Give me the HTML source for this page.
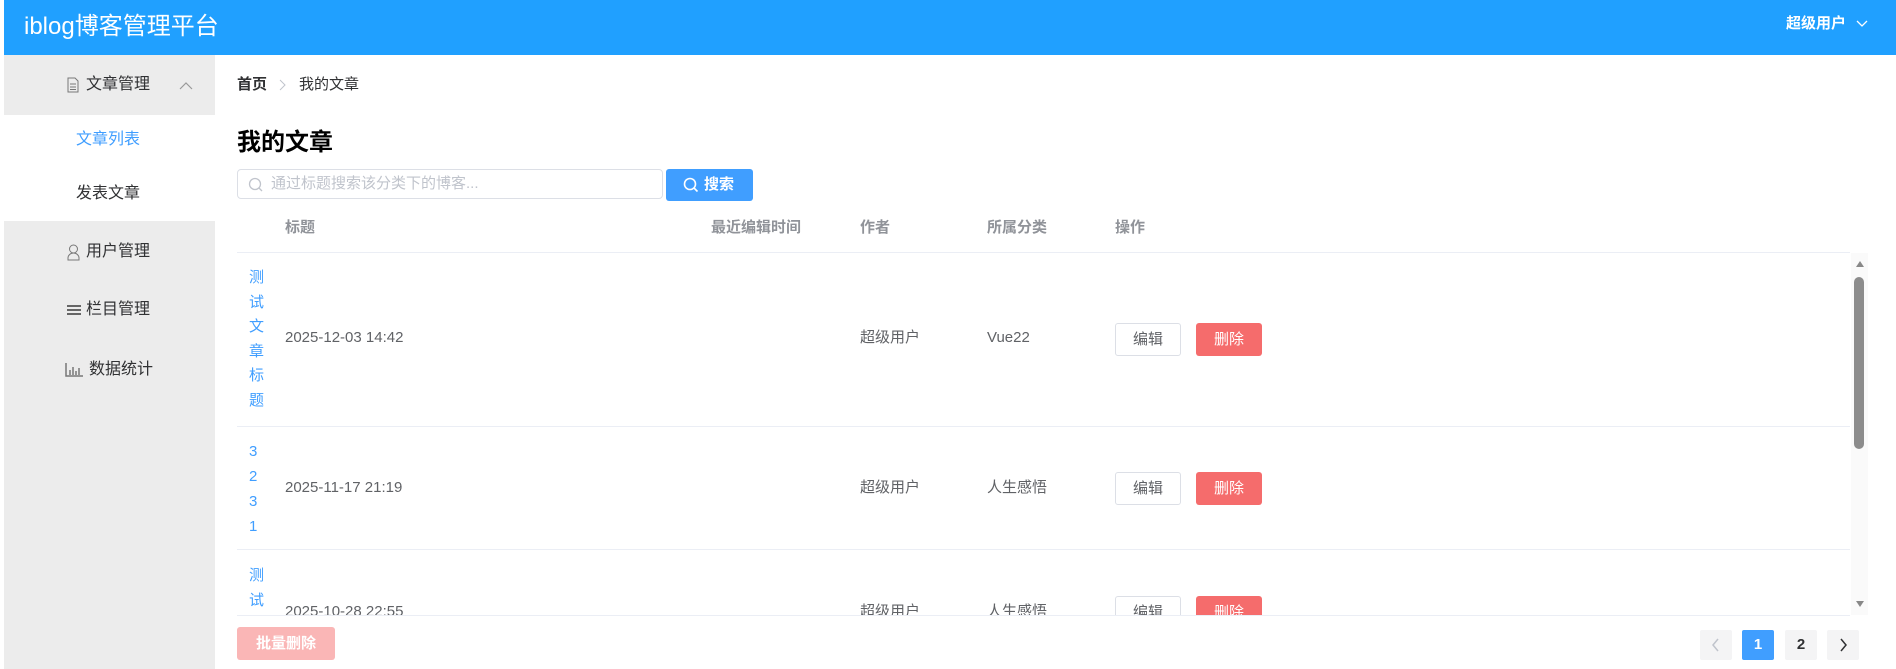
<!DOCTYPE html>
<html><head><meta charset="utf-8"><style>
*{margin:0;padding:0;box-sizing:border-box}
html,body{width:1896px;height:669px;overflow:hidden}
body{background:#fff;font-family:"Liberation Sans","Noto Sans CJK SC",sans-serif;position:relative}
.a{position:absolute;white-space:nowrap}
.hdr{left:4px;top:0;width:1892px;height:55px;background:#20a0ff}
.side{left:4px;top:55px;width:211px;height:614px;background:#ececec}
.mi{font-size:16px;color:#303133;line-height:20px}
.th{font-size:15px;color:#909399;font-weight:bold;top:217px;line-height:20px}
.td{font-size:15px;color:#606266;line-height:20px}
.vc{font-size:15px;color:#409eff;left:249px;line-height:20px;white-space:normal;word-break:break-all;width:12px}
.btn{width:66px;height:33px;border-radius:3px;font-size:15px;text-align:center;line-height:31px}
.ed{border:1px solid #dcdfe6;color:#606266;background:#fff;left:1115px}
.del{background:#f56c6c;color:#fff;left:1196px;line-height:33px}
.line{height:1px;background:#ebeef5;left:237px;width:1613px}
.pg{width:32px;height:30px;background:#f4f4f5;border-radius:2px;font-size:15px;font-weight:bold;text-align:center;line-height:30px;color:#303133;top:630px}
</style></head><body>
<div class="a hdr"></div>
<div class="a" style="left:24px;top:12px;font-size:24px;color:#fff;line-height:30px">iblog博客管理平台</div>
<div class="a" style="left:1786px;top:14px;font-size:15px;color:#fff;line-height:20px;font-weight:bold">超级用户</div>
<svg class="a" style="left:1856px;top:19px" width="12" height="10" viewBox="0 0 12 10"><path d="M1 2l5 5 5-5" stroke="#fff" stroke-width="1.3" fill="none"/></svg>

<div class="a side"></div>
<div class="a" style="left:4px;top:115px;width:211px;height:106px;background:#fff"></div>
<svg class="a" style="left:67px;top:77px" width="12" height="16" viewBox="0 0 12 16"><path d="M1 1h7l3 3v11H1z M3 7h6M3 10h6M3 12.5h6" stroke="#777" fill="none"/></svg>
<div class="a mi" style="left:86px;top:75px">文章管理</div>
<svg class="a" style="left:179px;top:81px" width="14" height="9" viewBox="0 0 14 9"><path d="M1 8l6-6 6 6" stroke="#999" stroke-width="1.2" fill="none"/></svg>
<div class="a mi" style="left:76px;top:130px;color:#409eff">文章列表</div>
<div class="a mi" style="left:76px;top:184px">发表文章</div>
<svg class="a" style="left:67px;top:244px" width="13" height="17" viewBox="0 0 13 17"><circle cx="6.5" cy="5" r="4" stroke="#777" fill="none"/><path d="M1 16v-2a5.5 5 0 0 1 11 0v2z" stroke="#777" fill="none"/></svg>
<div class="a mi" style="left:86px;top:242px">用户管理</div>
<svg class="a" style="left:67px;top:304px" width="14" height="12" viewBox="0 0 14 12"><path d="M0 2h14M0 6h14M0 10h14" stroke="#666" stroke-width="2"/></svg>
<div class="a mi" style="left:86px;top:300px">栏目管理</div>
<svg class="a" style="left:65px;top:363px" width="18" height="14" viewBox="0 0 18 14"><path d="M1 0v13h17M5 12V7M8 12V4M11 12V8M14 12V5" stroke="#777" stroke-width="1.5" fill="none"/></svg>
<div class="a mi" style="left:89px;top:360px">数据统计</div>

<div class="a" style="left:237px;top:75px;font-size:15px;font-weight:bold;color:#303133;line-height:20px">首页</div>
<svg class="a" style="left:279px;top:79px" width="8" height="12" viewBox="0 0 8 12"><path d="M1 1l5 5-5 5" stroke="#c0c4cc" fill="none"/></svg>
<div class="a" style="left:299px;top:75px;font-size:15px;color:#303133;line-height:20px">我的文章</div>
<div class="a" style="left:237px;top:128px;font-size:24px;font-weight:bold;color:#000;line-height:30px">我的文章</div>
<div class="a" style="left:237px;top:169px;width:426px;height:30px;border:1px solid #dcdfe6;border-radius:4px"></div>
<svg class="a" style="left:248px;top:177px" width="15" height="15" viewBox="0 0 15 15"><circle cx="7" cy="7" r="5.5" stroke="#c0c4cc" stroke-width="1.3" fill="none"/><path d="M11 11l3 3" stroke="#c0c4cc" stroke-width="1.3"/></svg>
<div class="a" style="left:271px;top:174px;font-size:15px;color:#c0c4cc;line-height:20px">通过标题搜索该分类下的博客...</div>
<div class="a" style="left:666px;top:169px;width:87px;height:32px;background:#409eff;border-radius:3px"></div>
<svg class="a" style="left:683px;top:177px" width="16" height="16" viewBox="0 0 16 16"><circle cx="7" cy="7" r="5.5" stroke="#fff" stroke-width="1.6" fill="none"/><path d="M11 11l3.5 3.5" stroke="#fff" stroke-width="1.6"/></svg>
<div class="a" style="left:704px;top:175px;font-size:15px;font-weight:bold;color:#fff;line-height:20px">搜索</div>

<div class="a th" style="left:285px;top:218px">标题</div>
<div class="a th" style="left:711px;top:218px">最近编辑时间</div>
<div class="a th" style="left:860px;top:218px">作者</div>
<div class="a th" style="left:987px;top:218px">所属分类</div>
<div class="a th" style="left:1115px;top:218px">操作</div>
<div class="a line" style="top:252px"></div>

<div class="a" style="left:0;top:253px;width:1896px;height:362px;overflow:hidden">
<div class="a vc" style="top:13px;line-height:24.6px;width:16px">测试文章标题</div>
<div class="a td" style="left:285px;top:75px">2025-12-03 14:42</div>
<div class="a td" style="left:860px;top:75px">超级用户</div>
<div class="a td" style="left:987px;top:75px">Vue22</div>
<div class="a btn ed" style="top:70px">编辑</div>
<div class="a btn del" style="top:70px">删除</div>
<div class="a line" style="top:173px;width:1613px"></div>
<div class="a vc" style="top:186px;line-height:25px;width:10px">3231</div>
<div class="a td" style="left:285px;top:225px">2025-11-17 21:19</div>
<div class="a td" style="left:860px;top:225px">超级用户</div>
<div class="a td" style="left:987px;top:225px">人生感悟</div>
<div class="a btn ed" style="top:219px">编辑</div>
<div class="a btn del" style="top:219px">删除</div>
<div class="a line" style="top:296px;width:1613px"></div>
<div class="a vc" style="top:311px;line-height:24.6px;width:16px;height:50px;overflow:hidden">测试文章标题</div>
<div class="a td" style="left:285px;top:349px">2025-10-28 22:55</div>
<div class="a td" style="left:860px;top:349px">超级用户</div>
<div class="a td" style="left:987px;top:349px">人生感悟</div>
<div class="a btn ed" style="top:343px">编辑</div>
<div class="a btn del" style="top:343px">删除</div>
</div>
<div class="a line" style="top:615px"></div>
<div class="a" style="left:1851px;top:253px;width:17px;height:362px;background:#fafafa"></div>
<svg class="a" style="left:1855px;top:260px" width="10" height="8" viewBox="0 0 10 8"><path d="M5 1l4 6H1z" fill="#888"/></svg>
<div class="a" style="left:1854px;top:277px;width:10px;height:172px;background:#8c8c8c;border-radius:5px"></div>
<svg class="a" style="left:1855px;top:600px" width="10" height="8" viewBox="0 0 10 8"><path d="M5 7l4-6H1z" fill="#888"/></svg>

<div class="a" style="left:237px;top:627px;width:98px;height:33px;background:#fab6b6;border-radius:3px;color:#fff;font-size:15px;font-weight:bold;text-align:center;line-height:33px">批量删除</div>
<div class="a pg" style="left:1700px"><svg width="10" height="14" viewBox="0 0 10 14" style="margin-top:8px"><path d="M7 1L2 7l5 6" stroke="#c0c4cc" stroke-width="1.5" fill="none"/></svg></div>
<div class="a pg" style="left:1742px;background:#409eff;color:#fff">1</div>
<div class="a pg" style="left:1785px">2</div>
<div class="a pg" style="left:1827px"><svg width="10" height="14" viewBox="0 0 10 14" style="margin-top:8px"><path d="M3 1l5 6-5 6" stroke="#303133" stroke-width="1.5" fill="none"/></svg></div>
</body></html>
